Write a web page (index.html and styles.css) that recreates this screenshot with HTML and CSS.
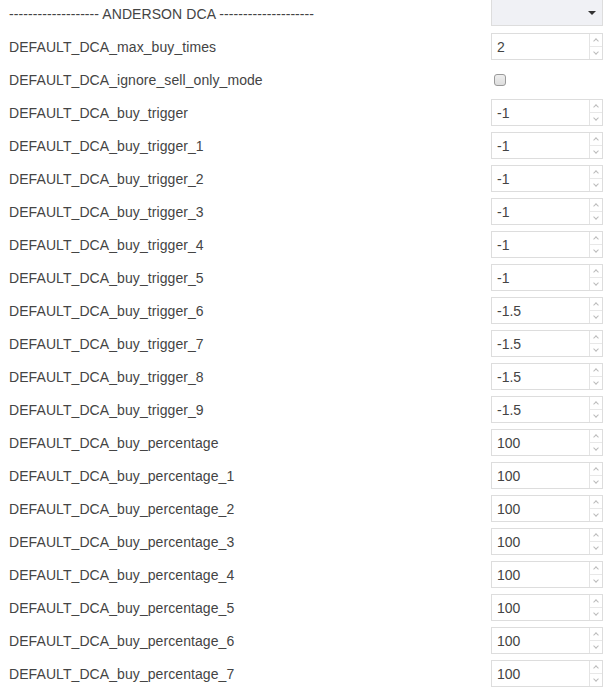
FILE: index.html
```html
<!DOCTYPE html>
<html>
<head>
<meta charset="utf-8">
<link rel="stylesheet" href="styles.css">
</head>
<body>
<div class="form">
  <div class="row">
    <div class="label">------------------- ANDERSON DCA --------------------</div>
    <div class="select"><span class="caret"></span></div>
  </div>
  <div class="row"><div class="label">DEFAULT_DCA_max_buy_times</div><div class="num"><span class="val">2</span><span class="spin"><span class="up"></span><span class="down"></span></span></div></div>
  <div class="row"><div class="label">DEFAULT_DCA_ignore_sell_only_mode</div><div class="checkwrap"><span class="check"></span></div></div>
  <div class="row"><div class="label">DEFAULT_DCA_buy_trigger</div><div class="num"><span class="val">-1</span><span class="spin"><span class="up"></span><span class="down"></span></span></div></div>
  <div class="row"><div class="label">DEFAULT_DCA_buy_trigger_1</div><div class="num"><span class="val">-1</span><span class="spin"><span class="up"></span><span class="down"></span></span></div></div>
  <div class="row"><div class="label">DEFAULT_DCA_buy_trigger_2</div><div class="num"><span class="val">-1</span><span class="spin"><span class="up"></span><span class="down"></span></span></div></div>
  <div class="row"><div class="label">DEFAULT_DCA_buy_trigger_3</div><div class="num"><span class="val">-1</span><span class="spin"><span class="up"></span><span class="down"></span></span></div></div>
  <div class="row"><div class="label">DEFAULT_DCA_buy_trigger_4</div><div class="num"><span class="val">-1</span><span class="spin"><span class="up"></span><span class="down"></span></span></div></div>
  <div class="row"><div class="label">DEFAULT_DCA_buy_trigger_5</div><div class="num"><span class="val">-1</span><span class="spin"><span class="up"></span><span class="down"></span></span></div></div>
  <div class="row"><div class="label">DEFAULT_DCA_buy_trigger_6</div><div class="num"><span class="val">-1.5</span><span class="spin"><span class="up"></span><span class="down"></span></span></div></div>
  <div class="row"><div class="label">DEFAULT_DCA_buy_trigger_7</div><div class="num"><span class="val">-1.5</span><span class="spin"><span class="up"></span><span class="down"></span></span></div></div>
  <div class="row"><div class="label">DEFAULT_DCA_buy_trigger_8</div><div class="num"><span class="val">-1.5</span><span class="spin"><span class="up"></span><span class="down"></span></span></div></div>
  <div class="row"><div class="label">DEFAULT_DCA_buy_trigger_9</div><div class="num"><span class="val">-1.5</span><span class="spin"><span class="up"></span><span class="down"></span></span></div></div>
  <div class="row"><div class="label">DEFAULT_DCA_buy_percentage</div><div class="num"><span class="val">100</span><span class="spin"><span class="up"></span><span class="down"></span></span></div></div>
  <div class="row"><div class="label">DEFAULT_DCA_buy_percentage_1</div><div class="num"><span class="val">100</span><span class="spin"><span class="up"></span><span class="down"></span></span></div></div>
  <div class="row"><div class="label">DEFAULT_DCA_buy_percentage_2</div><div class="num"><span class="val">100</span><span class="spin"><span class="up"></span><span class="down"></span></span></div></div>
  <div class="row"><div class="label">DEFAULT_DCA_buy_percentage_3</div><div class="num"><span class="val">100</span><span class="spin"><span class="up"></span><span class="down"></span></span></div></div>
  <div class="row"><div class="label">DEFAULT_DCA_buy_percentage_4</div><div class="num"><span class="val">100</span><span class="spin"><span class="up"></span><span class="down"></span></span></div></div>
  <div class="row"><div class="label">DEFAULT_DCA_buy_percentage_5</div><div class="num"><span class="val">100</span><span class="spin"><span class="up"></span><span class="down"></span></span></div></div>
  <div class="row"><div class="label">DEFAULT_DCA_buy_percentage_6</div><div class="num"><span class="val">100</span><span class="spin"><span class="up"></span><span class="down"></span></span></div></div>
  <div class="row"><div class="label">DEFAULT_DCA_buy_percentage_7</div><div class="num"><span class="val">100</span><span class="spin"><span class="up"></span><span class="down"></span></span></div></div>
</div>
</body>
</html>
```
FILE: styles.css
```css
html, body {
  margin: 0;
  padding: 0;
  background: #fff;
  overflow: hidden;
}
body {
  font-family: "Liberation Sans", Arial, sans-serif;
  font-size: 14px;
  color: #444;
}
.form {
  display: flex;
  flex-direction: column;
  padding: 0 1px 0 9px;
}
.row {
  display: flex;
  justify-content: space-between;
  align-items: flex-start;
  height: 33px;
}
.label {
  line-height: 26px;
  padding-top: 1px;
  white-space: nowrap;
  letter-spacing: 0.08px;
}
.select {
  box-sizing: border-box;
  width: 112px;
  height: 27px;
  margin-top: -1px;
  background: #f0f1f5;
  border: 1px solid #ddd;
  display: flex;
  justify-content: flex-end;
  align-items: center;
  padding-right: 6px;
}
.caret {
  width: 0;
  height: 0;
  border-left: 4px solid transparent;
  border-right: 4px solid transparent;
  border-top: 4px solid #333;
}
.num {
  box-sizing: border-box;
  width: 112px;
  height: 27px;
  border: 1px solid #ddd;
  display: flex;
  background: #fff;
}
.val {
  flex: 1;
  padding-left: 5px;
  line-height: 26px;
  font-size: 14px;
  color: #444;
}
.spin {
  width: 12px;
  border-left: 1px solid #e4e4e4;
  display: flex;
  flex-direction: column;
}
.up, .down {
  flex: 1;
  position: relative;
}
.up {
  border-bottom: 1px solid #e8e8e8;
}
.up::after, .down::after {
  content: "";
  position: absolute;
  left: 4px;
  width: 3px;
  height: 3px;
  border-color: #bbb;
  border-style: solid;
  border-width: 1px 0 0 1px;
}
.up::after {
  top: 5px;
  transform: rotate(45deg);
}
.down::after {
  top: 3px;
  transform: rotate(225deg);
}
.checkwrap {
  width: 112px;
  height: 26px;
  display: flex;
  align-items: center;
}
.check {
  box-sizing: border-box;
  width: 12px;
  height: 12px;
  margin-left: 3px;
  margin-top: 1px;
  border: 1px solid #9a9a9a;
  border-radius: 3px;
  background: linear-gradient(#eee, #ddd);
}
```
